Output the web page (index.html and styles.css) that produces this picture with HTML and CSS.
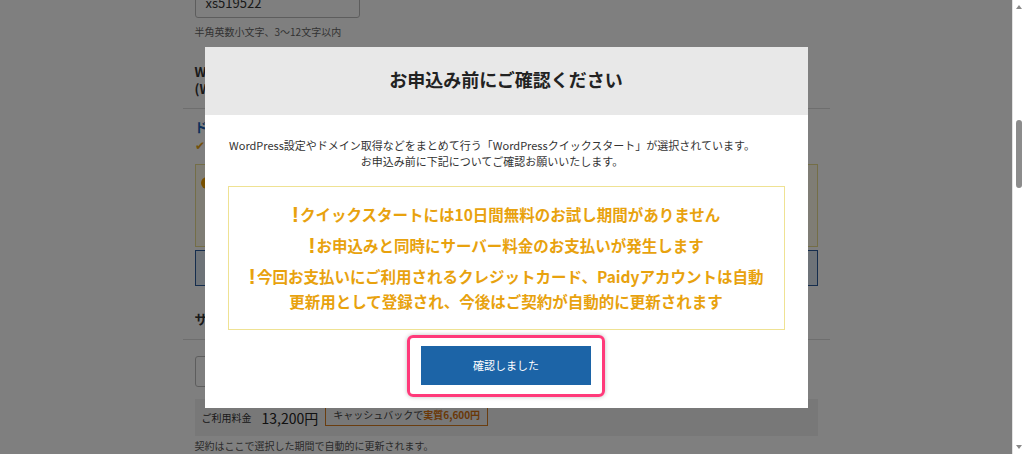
FILE: index.html
```html
<!DOCTYPE html>
<html lang="ja">
  <head>
    <meta charset="UTF-8" />
    <meta name="viewport" content="width=device-width, initial-scale=1.0" />
    <title>お申込み前にご確認ください</title>
    <link rel="stylesheet" href="styles.css">
  </head>
  <body>
    <div class="viewport">
      <div class="page">
        <div class="inner">
          <div class="text-input">xs519522</div>
          <p class="hint">半角英数小文字、3〜12文字以内</p>
          <h3 class="field-title">WordPress<br />(WP)</h3>
        </div>
        <hr class="rule rule-first" />
        <div class="inner">
          <p class="domain-link">ド</p>
          <p class="checked"><span class="check">&#10004;</span></p>
          <div class="notice-box"><span class="notice-dot"></span></div>
          <div class="info-box"></div>
          <h3 class="section-title">サ</h3>
        </div>
        <hr class="rule rule-second" />
        <div class="inner">
          <div class="select-box">12ヶ月</div>
          <div class="price-bar">
            <span class="price-label">ご利用料金</span>
            <span class="price">13,200円</span>
            <span class="cashback">キャッシュバックで<b>実質6,600円</b></span>
          </div>
          <p class="footnote">契約はここで選択した期間で自動的に更新されます。</p>
        </div>
      </div>

      <div class="overlay">
        <div class="modal">
          <div class="modal-header">
            <h2>お申込み前にご確認ください</h2>
          </div>
          <div class="modal-body">
            <p class="lead">
              WordPress設定やドメイン取得などをまとめて行う「WordPressクイックスタート」が選択されています。<br />
              お申込み前に下記についてご確認お願いいたします。
            </p>
            <div class="warning">
              <p><span class="mark">!</span>クイックスタートには10日間無料のお試し期間がありません</p>
              <p><span class="mark">!</span>お申込みと同時にサーバー料金のお支払いが発生します</p>
              <p><span class="mark">!</span>今回お支払いにご利用されるクレジットカード、Paidyアカウントは自動<br />更新用として登録され、今後はご契約が自動的に更新されます</p>
            </div>
            <div class="highlight">
              <button type="button" class="confirm">確認しました</button>
            </div>
          </div>
        </div>
      </div>
    </div>

    <div class="scrollbar">
      <span class="arrow arrow-up"></span>
      <span class="thumb"></span>
      <span class="arrow arrow-down"></span>
    </div>
  </body>
</html>
```

FILE: styles.css
```css
body {
  margin: 0;
  padding: 0;
  display: flex;
  height: 454px;
  overflow: hidden;
  background-color: #fff;
  font-family: "Noto Sans CJK JP", "Noto Sans", sans-serif;
  color: #333;
}

p,
h2,
h3 {
  margin: 0;
}

.viewport {
  position: relative;
  flex: 1;
  overflow: hidden;
}

/* Page behind the dialog */
.page {
  width: 647px;
  margin: -18px auto 0;
  background-color: #fff;
}

.inner {
  padding: 0 12px;
}

.text-input {
  width: 165px;
  height: 36px;
  box-sizing: border-box;
  border: 1px solid #bbb;
  border-radius: 3px;
  padding: 6px 10px 0;
  font-size: 13px;
  line-height: 28px;
}

.hint {
  margin-top: 7px;
  font-size: 10px;
  line-height: 14px;
  color: #666;
}

.field-title {
  margin-top: 24px;
  font-size: 13px;
  line-height: 17px;
  font-weight: bold;
}

.rule {
  border: none;
  border-top: 1px solid #ddd;
  margin: 0;
}

.rule-first {
  margin-top: 11px;
}

.domain-link {
  margin-top: 9px;
  font-size: 13px;
  line-height: 18px;
  font-weight: bold;
  color: #1a5fb4;
}

.checked {
  font-size: 12px;
  line-height: 17px;
}

.check {
  color: #e8a317;
}

.notice-box {
  margin-top: 11px;
  height: 83px;
  box-sizing: border-box;
  border: 1px solid #e9dc8f;
  background-color: #fffbea;
  padding: 12px 5px;
}

.notice-dot {
  display: block;
  width: 12px;
  height: 12px;
  border-radius: 50%;
  background-color: #f0a000;
}

.info-box {
  margin-top: 3px;
  height: 36px;
  box-sizing: border-box;
  border: 1px solid #2a5a9a;
  background-color: #dde6f0;
}

.section-title {
  margin-top: 24px;
  font-size: 13px;
  line-height: 18px;
  font-weight: bold;
}

.rule-second {
  margin-top: 11px;
}

.select-box {
  margin-top: 16px;
  width: 200px;
  height: 31px;
  box-sizing: border-box;
  border: 1px solid #bbb;
  border-radius: 3px;
  padding: 0 10px;
  font-size: 12px;
  line-height: 29px;
}

.price-bar {
  margin-top: 12px;
  height: 37px;
  background-color: #f0f0f0;
  display: flex;
  align-items: center;
  padding: 0 7px;
  font-size: 10px;
}

.price {
  margin-left: 10px;
  font-size: 14px;
  color: #222;
}

.cashback {
  margin-left: 7px;
  margin-top: -8px;
  border: 1px solid #d47a1e;
  padding: 4px 7px 3px;
  color: #444;
}

.cashback b {
  color: #d4700e;
}

.footnote {
  margin-top: 3px;
  font-size: 10px;
  line-height: 14px;
  color: #555;
}

/* Dialog */
.overlay {
  position: absolute;
  top: 0;
  left: 0;
  right: 0;
  bottom: 0;
  background-color: rgba(0, 0, 0, 0.5);
  display: flex;
  align-items: center;
  justify-content: center;
}

.modal {
  width: 603px;
  height: 361px;
  background-color: #fff;
}

.modal-header {
  height: 68px;
  box-sizing: border-box;
  padding-bottom: 4px;
  background-color: #e8e8e8;
  display: flex;
  align-items: center;
  justify-content: center;
}

.modal-header h2 {
  font-size: 18px;
  font-weight: bold;
  color: #222;
}

.modal-body {
  padding: 22px 23px 0;
  display: flex;
  flex-direction: column;
  align-items: center;
}

.lead {
  margin-right: 28px;
  font-size: 11px;
  line-height: 16px;
  text-align: center;
  white-space: nowrap;
}

.warning {
  margin-top: 17px;
  width: 100%;
  height: 144px;
  box-sizing: border-box;
  border: 1px solid #efe293;
  padding: 15px 4px;
  text-align: center;
  color: #e8a20e;
  font-size: 15.5px;
  font-weight: bold;
}

.warning p {
  line-height: 25px;
  white-space: nowrap;
}

.warning p + p {
  margin-top: 6px;
}

.mark {
  font-family: "Liberation Sans", Arial, sans-serif;
  font-size: 22px;
  font-weight: bold;
  margin-right: 1px;
  vertical-align: -1px;
  line-height: 0;
}

.highlight {
  margin-top: 5px;
  padding: 8px 11px 9px;
  border: 3px solid #ff3a7a;
  border-radius: 6px;
  box-shadow: 0 0 4px rgba(0, 0, 0, 0.25);
  display: flex;
}

.confirm {
  width: 170px;
  height: 39px;
  border: none;
  background-color: #1c64a7;
  color: #fff;
  font-family: "Noto Sans CJK JP", sans-serif;
  font-size: 11px;
  cursor: pointer;
}

/* Fake scrollbar */
.scrollbar {
  width: 11px;
  border-left: 1px solid #e2e2e2;
  background-color: #fff;
  position: relative;
}

.arrow {
  position: absolute;
  left: 3px;
  width: 0;
  height: 0;
  border-left: 3px solid transparent;
  border-right: 3px solid transparent;
}

.arrow-up {
  top: 5px;
  border-bottom: 4px solid #8a8a8a;
}

.arrow-down {
  bottom: 5px;
  border-top: 4px solid #8a8a8a;
}

.thumb {
  position: absolute;
  top: 120px;
  left: 3px;
  width: 6px;
  height: 68px;
  border-radius: 3px;
  background-color: #8c8c8c;
}
```
